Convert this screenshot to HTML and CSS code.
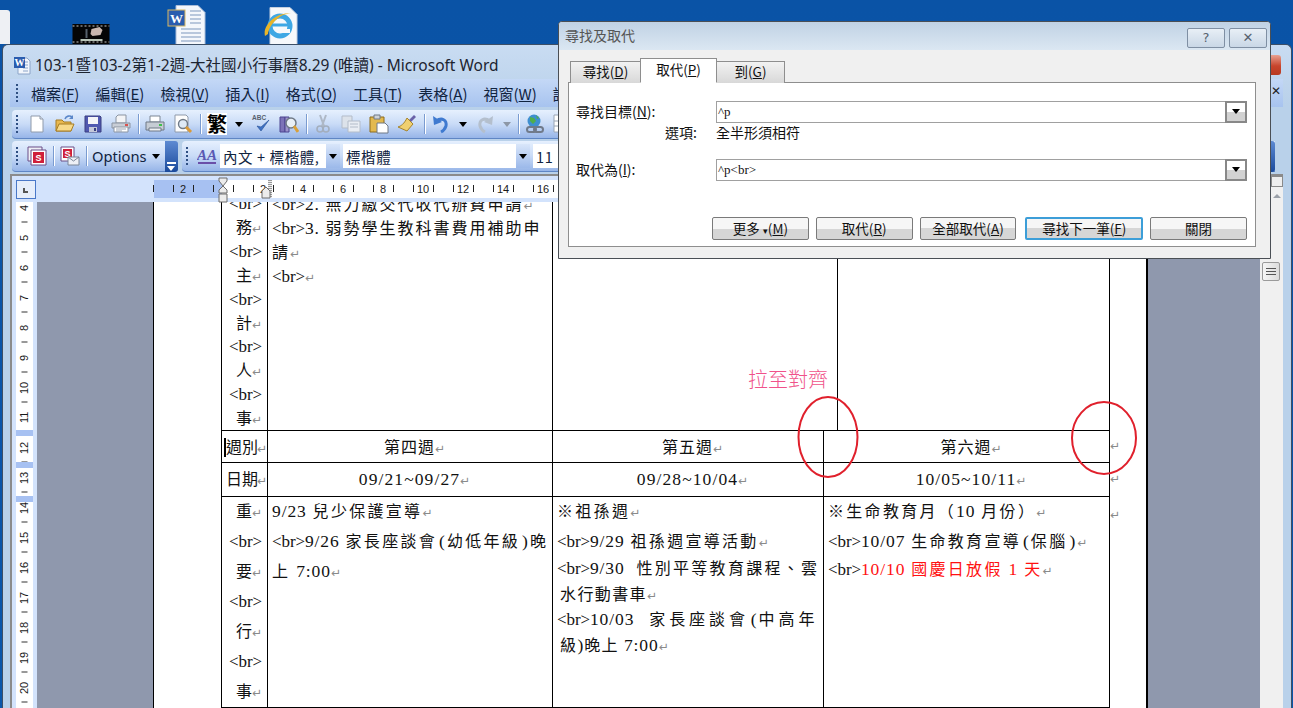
FILE: index.html
```html
<!DOCTYPE html>
<html lang="zh-Hant">
<head>
<meta charset="utf-8">
<title>尋找及取代</title>
<link rel="stylesheet" href="styles.css">
</head>
<body>
<div class="desk-sliver"></div>
<svg class="desk-icon film" viewBox="0 0 37 20"><rect width="37" height="20" fill="#050505"/><path d="M0 2h37M0 18h37" stroke="#666" stroke-width="2" stroke-dasharray="2 2"/><path d="M18 10l1-5 8-2 3 3-2 5-8 1z" fill="#c9b7b0"/><path d="M8 15h22v2H8z" fill="#b8c4b8"/><path d="M13 5h2v9h-2z" fill="#56606a"/></svg>
<svg class="desk-icon wdoc" viewBox="0 0 38 40"><path d="M8 .5h22l7 7v32H8z" fill="#f4f7fc" stroke="#a9bcd8"/><path d="M22 6h11M22 10h11M22 14h11M22 18h11M13 24h20M13 28h20M13 32h20M13 36h20" stroke="#7d97bd"/><rect x="0" y="5" width="17" height="16" fill="#2a5cae" stroke="#d8b860"/><text x="8.5" y="18" class="wglyph">W</text></svg>
<svg class="desk-icon iedoc" viewBox="0 0 34 38"><path d="M6 .5h20l7 7v30H6z" fill="#f6f8fb" stroke="#c3cfdf"/><circle cx="16" cy="19" r="10" fill="none" stroke="#3ea7e4" stroke-width="5"/><path d="M8 18h17" stroke="#3ea7e4" stroke-width="3"/><path d="M26 24h-8" stroke="#f6f8fb" stroke-width="4"/><path d="M1 29C-2 18 14 4 27 7 18 5 5 17 4 27z" fill="#e8b428"/></svg>

<main class="word">
  <header class="w-title">
    <svg class="w-app" viewBox="0 0 18 20"><path d="M5 3h9l3 3v13H5z" fill="#f2f6fc" stroke="#8ba4c8"/><path d="M10 7h5M10 10h5M10 13h5M10 16h5" stroke="#8ba4c8"/><rect x="1" y="2" width="11" height="11" fill="#2a5cae"/><text x="6.5" y="11" class="wglyph small">W</text></svg>
    <span class="w-name">103-1暨103-2第1-2週-大社國小行事曆8.29 (唯讀) - Microsoft Word</span>
    <span class="w-close"></span>
  </header>

  <nav class="menubar">
    <span class="grip"></span>
    <span class="mi">檔案(<u>F</u>)</span><span class="mi">編輯(<u>E</u>)</span><span class="mi">檢視(<u>V</u>)</span><span class="mi">插入(<u>I</u>)</span><span class="mi">格式(<u>O</u>)</span><span class="mi">工具(<u>T</u>)</span><span class="mi">表格(<u>A</u>)</span><span class="mi">視窗(<u>W</u>)</span><span class="mi">說明(<u>H</u>)</span>
    <span class="doc-x">✕</span>
  </nav>

  <div class="toolbar tb1">
    <span class="grip"></span>
    <svg class="ic" viewBox="0 0 20 20"><path d="M4 2h9l3 3v13H4z" fill="#fff" stroke="#8f9aaa"/><path d="M13 2v3h3" fill="#dfe6f1" stroke="#8f9aaa"/></svg>
    <svg class="ic" viewBox="0 0 20 20"><path d="M1 6h6l2 2h7v9H1z" fill="#e8b850" stroke="#a67d24"/><path d="M1 17l3-7h15l-3 7z" fill="#f7d98a" stroke="#a67d24"/><path d="M10 5c1-3 5-4 7-2" fill="none" stroke="#5b87c9" stroke-width="1.6"/><path d="M18 1v4h-4z" fill="#5b87c9"/></svg>
    <svg class="ic" viewBox="0 0 20 20"><path d="M2 2h15l1 1v15H2z" fill="#5058b0" stroke="#3a3f80"/><path d="M5 3h10v7H5z" fill="#f4f4f8"/><path d="M6 13h8v5H6z" fill="#c4c8da"/><path d="M11 14h2v3h-2z" fill="#3a3f80"/></svg>
    <svg class="ic" viewBox="0 0 20 20"><path d="M5 9V3l2-2h8v8z" fill="#f3f4f6" stroke="#8b94a1"/><path d="M1 9h18v5H1z" fill="#c9ced6" stroke="#8b94a1"/><rect x="14" y="10" width="3" height="2" fill="#d9534f"/><path d="M3 13h14v5H3z" fill="#fff" stroke="#8b94a1"/><path d="M5 15h10M5 17h6" stroke="#9aa4b3"/></svg>
    <span class="sep"></span>
    <svg class="ic" viewBox="0 0 20 20"><path d="M5 8V2h10v6z" fill="#fff" stroke="#7d8794"/><path d="M1 8h18v8H1z" fill="#c6ccd4" stroke="#6f7986"/><path d="M4 14h12v3H4z" fill="#eef0f3" stroke="#6f7986"/><rect x="14" y="10" width="3" height="2" fill="#3fc04c"/></svg>
    <svg class="ic" viewBox="0 0 20 20"><path d="M2 1h11l2 2v15H2z" fill="#fdfdfd" stroke="#8f9aaa"/><circle cx="10" cy="10" r="4.5" fill="#dfeaf6" stroke="#6f7986" stroke-width="1.4"/><path d="M13 13l5 5" stroke="#d99a3a" stroke-width="3"/></svg>
    <span class="sep"></span>
    <span class="ic-char">繁</span>
    <span class="drop"></span>
    <svg class="ic" viewBox="0 0 20 20"><text x="1" y="6" class="abc">ABC</text><path d="M6 12l4 5 8-11-8 7z" fill="#3f72c4" stroke="#254f96" stroke-width=".6"/></svg>
    <svg class="ic" viewBox="0 0 20 20"><path d="M1 3h5v15H1z" fill="#7c72b8" stroke="#4d4590"/><path d="M6 3h4v15H6z" fill="#9d95cc" stroke="#4d4590"/><circle cx="12" cy="9" r="5" fill="#e8eff7" stroke="#6f7986" stroke-width="1.5"/><path d="M15 12l4 6" stroke="#d9a03a" stroke-width="3"/></svg>
    <span class="sep"></span>
    <svg class="ic" viewBox="0 0 20 20"><path d="M7 1l4 11M13 1l-4 11" stroke="#aeb8c6" stroke-width="2"/><circle cx="7" cy="15" r="3" fill="none" stroke="#a3aebd" stroke-width="1.6"/><circle cx="13" cy="15" r="3" fill="none" stroke="#a3aebd" stroke-width="1.6"/></svg>
    <svg class="ic" viewBox="0 0 20 20"><path d="M1 2h10v12H1z" fill="#dce2ea" stroke="#b3bcc9"/><path d="M7 7h12v11H7z" fill="#e9edf3" stroke="#b3bcc9"/><path d="M9 10h8M9 13h8" stroke="#b3bcc9"/></svg>
    <svg class="ic" viewBox="0 0 20 20"><path d="M1 3h14v15H1z" fill="#e3b94e" stroke="#8c6b1c"/><path d="M5 1h6v4H5z" fill="#cdd2d9" stroke="#6f7986"/><path d="M8 9h8l3 3v7H8z" fill="#fff" stroke="#6f7986"/></svg>
    <svg class="ic" viewBox="0 0 20 20"><path d="M12 6l5-5 2 2-5 5z" fill="#6a62a8"/><path d="M10 4l6 6-6 7-9-4c3-1 6-3 9-9z" fill="#f0d070" stroke="#a6842c"/></svg>
    <span class="sep"></span>
    <svg class="ic" viewBox="0 0 20 20"><path d="M5 7c6-4 11-1 10 5-1 3-3 5-5 6" fill="none" stroke="#3f7ad0" stroke-width="3"/><path d="M2 2l1 9 8-3z" fill="#3f7ad0"/></svg>
    <span class="drop"></span>
    <svg class="ic" viewBox="0 0 20 20"><path d="M15 7C9 3 4 6 5 12c1 3 3 5 5 6" fill="none" stroke="#b4bfcd" stroke-width="3"/><path d="M18 2l-1 9-8-3z" fill="#b4bfcd"/></svg>
    <span class="drop off"></span>
    <span class="sep"></span>
    <svg class="ic" viewBox="0 0 20 20"><circle cx="9" cy="7" r="6.5" fill="#3f8fd0"/><path d="M5 3l4 1 2 3-3 3-3-3zM11 1l3 3-2 1z" fill="#4fae4c"/><rect x="2" y="13" width="9" height="5" rx="2.5" fill="none" stroke="#707a8a" stroke-width="2"/><rect x="9" y="13" width="9" height="5" rx="2.5" fill="none" stroke="#707a8a" stroke-width="2"/></svg>
    <svg class="ic" viewBox="0 0 20 20"><path d="M1 1h17v17H1zM1 7h17M1 12h17M7 1v17M12 1v17" fill="#fff" stroke="#9aa6b6"/></svg>
  </div>

  <div class="rows2">
    <div class="toolbar tb2a">
      <span class="grip"></span>
      <svg class="ic" viewBox="0 0 20 20"><path d="M1 1h14v14H1z" fill="#eef0f6" stroke="#6a4d86"/><path d="M4 4h15v15H4z" fill="#fff" stroke="#6a4d86"/><rect x="6" y="6" width="11" height="11" fill="#cf1f3a"/><text x="11.5" y="15" class="sglyph">S</text></svg>
      <span class="sep s2"></span>
      <svg class="ic" viewBox="0 0 20 20"><path d="M1 1h13v14H1z" fill="#fff" stroke="#6a4d86"/><rect x="3" y="3" width="9" height="9" fill="#cf1f3a"/><text x="7.5" y="10.5" class="sglyph">S</text><path d="M8 11h11v8H8z" fill="#eef0f6" stroke="#7b8698"/><path d="M8 11l5.5 4L19 11" fill="none" stroke="#7b8698"/></svg>
      <span class="sep s2"></span>
      <span class="opt">Options</span><span class="drop"></span>
    </div>
    <span class="chev"><i></i></span>
    <div class="toolbar tb2b">
      <span class="grip"></span>
      <svg class="ic" viewBox="0 0 20 20"><text x="0" y="14" class="aa">AA</text><path d="M1 17h18" stroke="#6a4fa8" stroke-width="2"/></svg>
      <span class="combo c1"><span class="ct">內文 + 標楷體,</span><span class="cb"></span></span>
      <span class="combo c2"><span class="ct">標楷體</span><span class="cb"></span></span>
      <span class="combo c3"><span class="ct">11</span></span>
      <span class="chev end-chev"></span>
    </div>
  </div>

  <section class="workspace">
    <div class="hruler">
      <span class="tab-btn"><i></i></span>
      <div class="hr-track">
        <span class="m t"></span><span class="m"></span><span class="m t"></span><span class="m">2</span><span class="m t"></span><span class="m"></span><span class="m t"></span><span class="m"></span><span class="m t"></span><span class="m"></span><span class="m t"></span><span class="m">2</span><span class="m t"></span><span class="m"></span><span class="m t"></span><span class="m">4</span><span class="m t"></span><span class="m"></span><span class="m t"></span><span class="m">6</span><span class="m t"></span><span class="m"></span><span class="m t"></span><span class="m">8</span><span class="m t"></span><span class="m"></span><span class="m t"></span><span class="m">10</span><span class="m t"></span><span class="m"></span><span class="m t"></span><span class="m">12</span><span class="m t"></span><span class="m"></span><span class="m t"></span><span class="m">14</span><span class="m t"></span><span class="m"></span><span class="m t"></span><span class="m">16</span><span class="m t"></span>
        <span class="hr-margin"></span>
        <svg class="hr-ind a" viewBox="0 0 10 26"><path d="M1 1h8v3L5 9 1 4zM5 9l4 4v3H1v-3zM1 17h8v8H1z" fill="#ececec" stroke="#6d6d6d"/></svg>
        <svg class="hr-ind b" viewBox="0 0 10 14"><path d="M5 1l4 4v7H1V5z" fill="#ececec" stroke="#6d6d6d"/></svg>
      </div>
      <span class="sb-up"></span>
      <span class="sb-arrow"></span>
    </div>
    <div class="body-row">
      <div class="vruler">
        <div class="vr-track">
          <span class="v">4</span><span class="v t"></span><span class="v">5</span><span class="v t"></span><span class="v">6</span><span class="v t"></span><span class="v">7</span><span class="v t"></span><span class="v">8</span><span class="v t"></span><span class="v">9</span><span class="v t"></span><span class="v">10</span><span class="v t"></span><span class="v">11</span><span class="v t"></span><span class="v">12</span><span class="v t"></span><span class="v">13</span><span class="v t"></span><span class="v">14</span><span class="v t"></span><span class="v">15</span><span class="v t"></span><span class="v">16</span><span class="v t"></span><span class="v">17</span><span class="v t"></span><span class="v">18</span><span class="v t"></span><span class="v">19</span><span class="v t"></span><span class="v">20</span><span class="v t"></span>
        </div>
        <i class="vm m1"></i><i class="vm m2"></i><i class="vm m3"></i>
      </div>
      <div class="gutter"></div>
      <div class="page">
        <table class="tbl top">
          <colgroup><col class="c-a"><col class="c-b"><col class="c-c"><col class="c-d"></colgroup>
          <tr>
            <td class="side">
              <b class="tag">&lt;br&gt;</b><br>務<i class="pm">↵</i><br><b class="tag">&lt;br&gt;</b><br>主<i class="pm">↵</i><br><b class="tag">&lt;br&gt;</b><br>計<i class="pm">↵</i><br><b class="tag">&lt;br&gt;</b><br>人<i class="pm">↵</i><br><b class="tag">&lt;br&gt;</b><br>事<i class="pm">↵</i>
            </td>
            <td class="main loose"><b class="tag">&lt;br&gt;</b><span class="lat">2.</span> 無力繳交代收代辦費申請<i class="pm">↵</i><br><b class="tag">&lt;br&gt;</b><span class="lat">3.</span> 弱勢學生教科書費用補助申<br>請<i class="pm">↵</i><br><b class="tag">&lt;br&gt;</b><i class="pm">↵</i></td>
            <td></td>
            <td></td>
          </tr>
        </table>
        <table class="tbl bottom">
          <colgroup><col class="c-a"><col class="c-b"><col class="c-e"><col class="c-f"><col class="c-g"></colgroup>
          <tr class="r-week">
            <td class="head"><i class="caret"></i>週別<i class="pm">↵</i></td>
            <td class="center">第四週<i class="pm">↵</i></td>
            <td class="center">第五週<i class="pm">↵</i></td>
            <td class="center">第六週<i class="pm">↵</i></td>
            <td class="end"><i class="pm">↵</i></td>
          </tr>
          <tr class="r-date">
            <td class="head">日期<i class="pm">↵</i></td>
            <td class="center"><span class="lat">09/21~09/27</span><i class="pm">↵</i></td>
            <td class="center"><span class="lat">09/28~10/04</span><i class="pm">↵</i></td>
            <td class="center"><span class="lat">10/05~10/11</span><i class="pm">↵</i></td>
            <td class="end"><i class="pm">↵</i></td>
          </tr>
          <tr class="r-main">
            <td class="side"><p class="l30">重<i class="pm">↵</i><br><b class="tag">&lt;br&gt;</b><br>要<i class="pm">↵</i><br><b class="tag">&lt;br&gt;</b><br>行<i class="pm">↵</i><br><b class="tag">&lt;br&gt;</b><br>事<i class="pm">↵</i></p></td>
            <td class="main"><p class="l30"><span class="lat">9/23</span> 兒少保護宣導<i class="pm">↵</i><br><b class="tag">&lt;br&gt;</b><span class="lat">9/26</span> 家長座談會<span class="lat par">(</span>幼低年級<span class="lat par">)</span>晚<br>上 <span class="lat">7:00</span><i class="pm">↵</i></p></td>
            <td class="main">
              <p class="l30">※祖孫週<i class="pm">↵</i></p>
              <p class="l30"><b class="tag">&lt;br&gt;</b><span class="lat">9/29</span> 祖孫週宣導活動<i class="pm">↵</i></p>
              <p class="l25"><b class="tag">&lt;br&gt;</b><span class="lat">9/30</span>&nbsp; 性別平等教育課程、雲<br><span class="hang">水行動書車<i class="pm">↵</i></span></p>
              <p class="l25 spread"><b class="tag">&lt;br&gt;</b><span class="lat">10/03</span>&nbsp; 家長座談會<span class="lat par">(</span>中高年<br><span class="hang">級<span class="lat">)</span>晚上 <span class="lat">7:00</span><i class="pm">↵</i></span></p>
            </td>
            <td class="main">
              <p class="l30">※生命教育月（<span class="lat">10</span> 月份）<i class="pm">↵</i></p>
              <p class="l30"><b class="tag">&lt;br&gt;</b><span class="lat">10/07</span> 生命教育宣導<span class="lat par">(</span>保腦<span class="lat par">)</span><i class="pm">↵</i></p>
              <p class="l26"><b class="tag">&lt;br&gt;</b><span class="red"><span class="lat">10/10</span> 國慶日放假 <span class="lat">1</span> 天</span><i class="pm">↵</i></p>
            </td>
            <td class="end top-al"><i class="pm">↵</i></td>
          </tr>
        </table>
      </div>
      <div class="gutter right"></div>
      <div class="scroll">
        <span class="sb-thumb"><i></i><i></i><i></i></span>
      </div>
    </div>
  </section>
</main>

<span class="note">拉至對齊</span>
<svg class="marks" viewBox="0 0 1293 708"><ellipse cx="828" cy="437" rx="29.500" ry="40" /><ellipse cx="1104" cy="438" rx="32" ry="36"/></svg>

<aside class="dialog">
  <header class="d-title">
    <span class="d-name">尋找及取代</span>
    <span class="d-btn">?</span>
    <span class="d-btn">✕</span>
  </header>
  <div class="d-tabs">
    <span class="tab">尋找(<u>D</u>)</span>
    <span class="tab on">取代(<u>P</u>)</span>
    <span class="tab">到(<u>G</u>)</span>
  </div>
  <div class="d-panel">
    <div class="d-row r1">
      <label class="d-label">尋找目標(<u>N</u>):</label>
      <span class="d-input"><span class="d-val">^p</span><span class="d-drop"></span></span>
    </div>
    <div class="d-row r2">
      <span class="d-label right">選項:</span>
      <span class="d-opt">全半形須相符</span>
    </div>
    <div class="d-row r3">
      <label class="d-label">取代為(<u>I</u>):</label>
      <span class="d-input"><span class="d-val">^p&lt;br&gt;</span><span class="d-drop"></span></span>
    </div>
    <div class="d-actions">
      <span class="btn b-more">更多 <small>▾</small>(<u>M</u>)</span>
      <span class="btn b-rep">取代(<u>R</u>)</span>
      <span class="btn b-all">全部取代(<u>A</u>)</span>
      <span class="btn b-next">尋找下一筆(<u>F</u>)</span>
      <span class="btn b-close">關閉</span>
    </div>
  </div>
</aside>
</body>
</html>
```
FILE: styles.css
```css
* { box-sizing: border-box; }
html, body { margin: 0; height: 708px; }
body {
  position: relative;
  width: 1293px;
  overflow: hidden;
  background: linear-gradient(#0a53a6, #0a56aa);
  font-family: "Noto Sans CJK TC", "Liberation Sans", sans-serif;
  color: #000;
}
i { font-style: normal; }
u { text-decoration: underline; }

/* desktop */
.desk-sliver { position: absolute; left: 0; top: 10px; width: 10px; height: 34px; background: #eef0f4; border-radius: 0 3px 0 0; }
.desk-icon { position: absolute; display: block; }
.film { left: 72px; top: 24px; width: 38px; height: 20px; }
.wdoc { left: 167px; top: 5px; width: 40px; height: 40px; }
.iedoc { left: 264px; top: 7px; width: 34px; height: 38px; }
.wglyph { font: bold 13px "Liberation Serif", serif; fill: #fff; text-anchor: middle; }
.wglyph.small { font-size: 10px; }

/* word window */
.word {
  position: absolute; left: 2px; top: 44px; width: 1290px; height: 680px;
  background: linear-gradient(#c9dcf2, #b9d1ea 60px);
  border: 1px solid #3d4f66;
  border-bottom: 0;
  border-radius: 6px 6px 0 0;
  display: flex; flex-direction: column;
}
.w-title { height: 33px; display: flex; align-items: center; padding: 7px 0 0 9px; gap: 3px; position: relative; }
.w-app { width: 20px; height: 20px; flex: none; }
.w-name { font: 15.500px/20px "Noto Sans", "Noto Sans CJK TC", sans-serif; color: #1c2430; white-space: nowrap; }
.w-close { position: absolute; left: 1267px; top: 10px; width: 11px; height: 20px; background: linear-gradient(#e8a090, #c8452c 55%, #b83a20); border-radius: 0 3px 3px 0; }

.menubar {
  height: 28px; margin: 1px 8px 0 7px;
  background: linear-gradient(#c4d8f6, #a7c3ef);
  display: flex; align-items: center; gap: 16px; padding-left: 6px; overflow: hidden; position: relative;
  font-size: 15px; color: #10233f;
}
.mi { white-space: nowrap; flex: none; }
.menubar .grip { margin-right: -3px; }
.doc-x { position: absolute; right: 2px; top: 5px; font: bold 12px "DejaVu Sans", sans-serif; color: #222; }
.grip { width: 2px; height: 18px; flex: none; background: repeating-linear-gradient(#2f4f82 0 2px, transparent 2px 4px); }

.toolbar {
  display: flex; align-items: center; gap: 8px;
  background: linear-gradient(#e6f0fe, #c9dbf7 50%, #97b5e8);
  border-bottom: 1px solid #5f86c4;
  border-radius: 4px;
}
.tb1 { width: 1240px; height: 29px; margin: 3px 1px 0 9px; padding-left: 4px; overflow: hidden; }
.tb1 .grip { margin-right: 1px; }
.ic { width: 20px; height: 20px; flex: none; display: block; }
.ic-char { width: 20px; height: 22px; flex: none; font-size: 20px; line-height: 22px; font-weight: 700; background: #fff; text-align: center; margin: 0; overflow: hidden; }
.sep { width: 1px; height: 20px; flex: none; background: #7a9bd0; box-shadow: 1px 0 #fff; margin: 0 -2px 0 -1px; }
.drop { width: 0; height: 0; flex: none; border: 4px solid transparent; border-top: 5px solid #000; border-bottom: 0; }
.drop.off { border-top-color: #8d97a6; }
.abc { font: bold 6.500px "Liberation Sans", sans-serif; fill: #56606e; }
.sglyph { font: bold 9px "Liberation Sans", sans-serif; fill: #fff; text-anchor: middle; }
.aa { font: italic bold 15px "Liberation Serif", serif; fill: #5a58b4; }

.rows2 { display: flex; align-items: stretch; height: 32px; margin: 2px 0 0 9px; overflow: hidden; }
.tb2a { width: 153px; height: 31px; padding-left: 4px; border-radius: 4px 0 0 4px; flex: none; gap: 0; }
.tb2a .ic { margin-left: 9px; }
.tb2a .sep.s2 { margin: 0 0 0 6px; }
.tb2a .sep.s2 ~ .ic { margin-left: 6px; }
.opt { margin-left: 5px; font: 14.700px "Noto Sans", sans-serif; color: #10233f; }
.tb2a .drop { margin-left: 5px; }
.chev { width: 13px; height: 31px; flex: none; background: linear-gradient(#5d8ad2, #1a4a9c); position: relative; margin-right: 4px; border-radius: 0 3px 3px 0; }
.chev i { position: absolute; left: 2px; top: 21px; width: 9px; height: 8px; border-top: 2px solid #fff; }
.chev i::after { content: ""; position: absolute; left: 0; top: 2px; border: 4.500px solid transparent; border-top: 5px solid #fff; border-bottom: 0; }
.tb2b { width: 1093px; flex: none; height: 31px; padding-left: 4px; gap: 0; border-radius: 4px 0 0 4px; }
.tb2b .ic { margin-left: 9px; margin-right: 3px; }
.combo { height: 24px; background: #fff; display: flex; align-items: center; flex: none; font-size: 14.500px; color: #10233f; margin-right: 3px; }
.c1 { width: 120px; }
.c2 { width: 187px; }
.c3 { width: 60px; }
.ct { flex: 1; padding-left: 3px; white-space: nowrap; overflow: hidden; letter-spacing: .6px; }
.cb { width: 14px; height: 24px; flex: none; background: linear-gradient(#d9e6fa, #9cb9ea); position: relative; }
.cb::after { content: ""; position: absolute; left: 3px; top: 10px; border: 4px solid transparent; border-top: 5px solid #000; border-bottom: 0; }
.end-chev { margin: 0 0 0 auto; width: 14px; }

/* workspace */
.workspace { width: 1273px; margin: 1px 0 0 7px; flex: 1; min-height: 0; border-top: 2px solid #8b8b8b; border-left: 2px solid #8b8b8b; display: flex; flex-direction: column; overflow: hidden; }
.hruler { height: 26px; flex: none; background: linear-gradient(90deg, #d3e3fc 1248px, #f0f0f0 1248px); display: flex; align-items: center; padding-left: 4px; position: relative; }
.tab-btn { width: 20px; height: 19px; border: 1px solid #4a78c8; background: #e6eefb; position: relative; flex: none; }
.tab-btn i { position: absolute; left: 6px; top: 7px; width: 5px; height: 5px; border-left: 2px solid #555; border-bottom: 2px solid #555; }
.hr-track { margin-left: 118px; width: 410px; height: 18px; display: flex; background: linear-gradient(90deg, #a7c1f2 68px, #fff 68px); position: relative; font: 11px/18px "Liberation Sans", sans-serif; color: #1a1a1a; flex: none; }
.m { width: 10px; flex: none; text-align: center; white-space: nowrap; display: flex; justify-content: center; position: relative; }
.m:first-child { margin-left: -6px; }
.m.t::before { content: ""; width: 1px; height: 7px; margin-top: 5px; background: #222; }
.hr-margin { position: absolute; left: 114px; top: 0; width: 4px; height: 18px; background: repeating-linear-gradient(#999 0 1px, #eee 1px 2px); }
.hr-ind { position: absolute; display: block; }
.hr-ind.a { left: 64px; top: -3px; width: 10px; height: 26px; }
.hr-ind.b { left: 107px; top: 6px; width: 10px; height: 14px; }
.sb-up { position: absolute; right: 0; top: 0; width: 12px; height: 11px; background: #eee; border: 1px solid #8a8a8a; }
.sb-arrow { position: absolute; right: 2px; top: 18px; border: 4px solid transparent; border-bottom: 4px solid #9aa0a8; border-top: 0; }

.body-row { flex: 1; min-height: 0; display: flex; overflow: hidden; }
.vruler { width: 25px; flex: none; background: #d3e3fc; padding-left: 4px; position: relative; overflow: hidden; }
.vr-track { width: 17px; height: 100%; background: #fff; display: flex; flex-direction: column; align-items: center; margin-top: -2px; }
.v { height: 15px; flex: none; writing-mode: vertical-rl; transform: rotate(180deg); font: 11px/15px "Liberation Sans", sans-serif; color: #1a1a1a; display: flex; justify-content: center; align-items: center; }
.v.t::before { content: ""; width: 1px; height: 6px; background: #333; transform: rotate(90deg); }
.vm { position: absolute; left: 4px; width: 17px; height: 6px; background: #a7c1f2; }
.m1 { top: 228px; } .m2 { top: 260px; } .m3 { top: 294px; }
.gutter { width: 117px; flex: none; background: #8f98ad; border-right: 1px solid #000; }
.gutter.right { width: 114px; border-right: 0; border-left: 2px solid #000; }

.page { width: 992px; flex: none; background: #fff; padding-left: 67px; overflow: hidden; font-size: 16px; letter-spacing: 0; color: #111; white-space: nowrap; }
.tbl { border-collapse: collapse; table-layout: fixed; margin: 0; }
.tbl td { border: 1px solid #000; padding: 0; vertical-align: top; }
.tbl.top { margin-top: -12px; width: 888px; }
.tbl.bottom { width: 900px; margin-top: -1px; }
.c-a { width: 46px; } .c-b { width: 285px; } .c-c { width: 285px; } .c-d { width: 272px; }
.c-e { width: 271px; } .c-f { width: 286px; } .c-g { width: 12px; }
.tbl td.end { border: 0; padding: 0 0 6px 0; vertical-align: middle; line-height: 14px; }
.tbl td.end.top-al { vertical-align: top; padding-top: 8px; }
.lat { font-family: "Liberation Serif", serif; font-size: 17.500px; letter-spacing: .9px; line-height: 1; }
.par { letter-spacing: 2px; padding-left: 2px; }
.tag { font: 400 17px/1 "Liberation Serif", serif; letter-spacing: -.1px; }
.pm { font: 12px/1 "DejaVu Sans", sans-serif; letter-spacing: 0; color: #8a8a8a; }
.side { text-align: right; padding-right: 5px !important; line-height: 23.900px; }
.main { padding: 0 0 0 4px !important; line-height: 24px; }
.main.loose { letter-spacing: 2px; }
.top .side { height: 239px; }
.r-week td { height: 32px; vertical-align: middle; line-height: 26px; padding-bottom: 2px; }
.r-date td { height: 34px; vertical-align: middle; line-height: 26px; padding-bottom: 4px; }
.r-main td { height: 211px; }
.r-main .main { letter-spacing: 2.300px; }
.r-main td > p:first-child { margin-top: -2px; }
.head { text-align: right; padding-right: 0 !important; }
.head .pm { margin-left: -1px; }
.center { text-align: center; letter-spacing: 1px; padding-left: 9px !important; }
.center .lat { letter-spacing: 1.100px; }
.tbl p { margin: 0; }
.l30 { line-height: 30px; }
.l25 { line-height: 25.500px; }
.l26 { line-height: 26px; }
.tbl .spread { letter-spacing: 3.900px; }
.hang { margin-left: 3px; letter-spacing: 1.400px; }
.red, .red .lat { color: #f11; }
.caret { display: inline-block; width: 2px; height: 19px; background: #000; vertical-align: -4px; }

.scroll { width: 23px; flex: none; background: #f0f0f0; position: relative; }
.sb-thumb { position: absolute; left: 2px; top: 60px; width: 18px; height: 19px; background: linear-gradient(90deg, #f5f5f5, #dcdcdc); border: 1px solid #9a9a9a; border-radius: 2px; display: flex; flex-direction: column; align-items: center; justify-content: center; gap: 2px; }
.sb-thumb i { width: 10px; height: 1px; background: #555; }

/* annotation */
.note { position: absolute; left: 748px; top: 366px; font: 300 20px/26px "Noto Sans CJK TC", sans-serif; color: #f0528a; white-space: nowrap; }
.marks { position: absolute; left: 0; top: 0; width: 1293px; height: 708px; pointer-events: none; }
.marks ellipse { fill: none; stroke: #e0202c; stroke-width: 2; }

/* dialog */
.dialog {
  position: absolute; left: 558px; top: 21px; width: 713px; height: 238px; z-index: 5;
  background: #f0f0f0; border: 1px solid #4a4f55; border-radius: 4px 4px 0 0;
  display: flex; flex-direction: column;
  font-size: 14px; color: #111;
}
.d-title { height: 28px; flex: none; background: linear-gradient(#c0d2e4, #dbe7f2); display: flex; align-items: center; padding: 0 3px 0 6px; gap: 4px; border-radius: 3px 3px 0 0; }
.d-name { flex: 1; color: #555; font-size: 14px; margin-top: -2px; }
.d-btn { width: 38px; height: 20px; margin-top: 3px; border: 1px solid #7f8fa3; border-radius: 2px; background: linear-gradient(#e8eff6, #c9d7e6); font: 13px/18px "DejaVu Sans", sans-serif; color: #56626e; text-align: center; }
.d-tabs { height: 33px; flex: none; display: flex; align-items: flex-end; padding-left: 11px; position: relative; z-index: 1; margin-bottom: -1px; }
.tab { height: 22px; background: linear-gradient(#f2f2f2, #d8d8d8); border: 1px solid #8e8e8e; border-bottom: 0; font-size: 13.500px; line-height: 18px; text-align: center; margin-left: -1px; }
.tab:nth-child(1) { width: 71px; margin-left: 0; }
.tab:nth-child(2) { width: 77px; height: 25px; background: #fff; line-height: 21px; }
.tab:nth-child(3) { width: 69px; }
.tab.on { position: relative; padding-bottom: 1px; border-bottom: 1px solid #fff; }
.d-panel { width: 688px; height: 165px; margin-left: 9px; background: #fff; border: 1px solid #8e8e8e; position: relative; padding: 18px 8px 0 7px; display: flex; flex-direction: column; }
.d-row { display: flex; align-items: center; }
.d-label { width: 140px; flex: none; white-space: nowrap; font-size: 14px; margin-top: -2px; }
.d-label.right { text-align: right; width: 121px; margin-right: 19px; }
.d-opt { margin-top: -2px; }
.d-input { flex: 1; height: 22px; border: 1px solid #a0a0a0; display: flex; align-items: center; position: relative; padding-left: 1px; }
.d-val { flex: 1; font: 13px/18px "Liberation Serif", serif; }
.d-drop { width: 22px; height: 22px; flex: none; margin: -1px -1px -1px 0; border: 2px solid #888; background: linear-gradient(#fff 50%, #d2d2d2 50%); position: relative; }
.d-drop::after { content: ""; position: absolute; left: 5px; top: 6px; border: 4.500px solid transparent; border-top: 5px solid #000; border-bottom: 0; }
.r2 { height: 19px; margin-top: 0; }
.r3 { margin-top: 17px; }
.d-actions { margin-top: auto; margin-bottom: 6px; margin-left: 136px; display: flex; gap: 7px; margin-right: 0; }
.btn { height: 23px; border: 1px solid #7a7a7a; border-radius: 2px; background: linear-gradient(#f6f6f6 50%, #d6d6d6 50%); text-align: center; font-size: 13.500px; line-height: 20px; white-space: nowrap; }
.btn small { font-size: 9px; }
.b-more, .b-rep, .b-all, .b-close { width: 97px; }
.b-next { width: 118px; border: 2px solid #3c9ed8; line-height: 18px; margin-left: 2px; }
```
